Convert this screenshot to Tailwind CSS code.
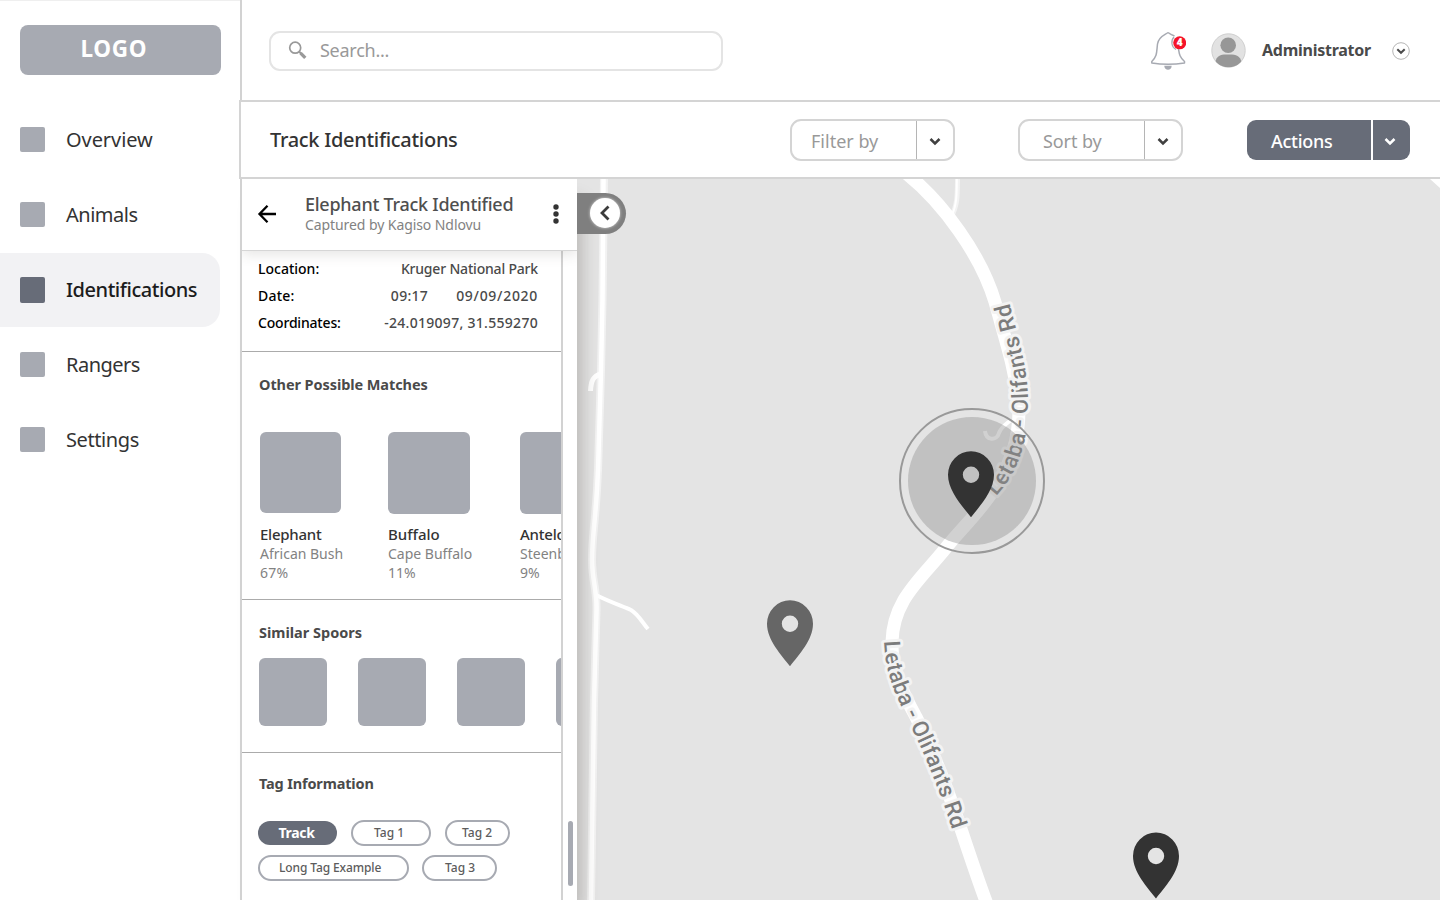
<!DOCTYPE html>
<html lang="en">
<head>
<meta charset="utf-8">
<title>Track Identifications</title>
<script src="https://cdn.jsdelivr.net/npm/@tailwindcss/browser@4"></script>
</head>
<body class="flex h-[900px] w-[1440px] overflow-hidden bg-white font-['Noto_Sans',sans-serif] text-[#333]">

<!-- Sidebar -->
<aside class="flex w-60 shrink-0 flex-col border-t border-[#efefef]">
  <div class="mt-6 ml-[19.5px] flex h-[50px] w-[201px] items-center rounded-lg bg-[#a7aab2] pl-[61px] text-[22.5px] leading-none font-bold text-white"><span class="-translate-y-[1px] tracking-[0.7px]">LOGO</span></div>
  <nav class="mt-[27px] flex flex-col text-xl">
    <a class="flex h-[75px] items-center pl-[19.5px]"><i class="mr-[21px] size-[25.5px] rounded-[2px] bg-[#a7aab2]"></i><span class="tracking-[-0.07px]">Overview</span></a>
    <a class="flex h-[75px] items-center pl-[19.5px]"><i class="mr-[21px] size-[25.5px] rounded-[2px] bg-[#a7aab2]"></i><span class="tracking-[-0.5px]">Animals</span></a>
    <a class="mt-px flex h-[74px] w-[220px] items-center rounded-r-[18px] bg-[#f2f2f4] pl-[19.5px] font-medium text-[#1c1c1c]"><i class="mr-[21px] size-[25.5px] rounded-[2px] bg-[#676c78]"></i><span class="tracking-[-0.46px]">Identifications</span></a>
    <a class="flex h-[75px] items-center pl-[19.5px]"><i class="mr-[21px] size-[25.5px] rounded-[2px] bg-[#a7aab2]"></i><span class="tracking-[-0.5px]">Rangers</span></a>
    <a class="flex h-[75px] items-center pl-[19.5px]"><i class="mr-[21px] size-[25.5px] rounded-[2px] bg-[#a7aab2]"></i><span class="tracking-[-0.4px]">Settings</span></a>
  </nav>
</aside>

<main class="flex w-[1200px] flex-col">
  <!-- Top bar -->
  <header class="flex h-[100px] shrink-0 items-center border-l-2 border-[#d2d2d2]">
    <div class="mt-[2px] ml-[27px] flex h-10 w-[454px] items-center rounded-[11px] border-2 border-[#e4e4e4] pb-[2px] pl-[17px] text-lg text-[#999]">
      <svg class="mr-[12px] size-5" viewBox="0 0 20 20" fill="none" stroke="#999"><circle cx="7.2" cy="7.7" r="5.500" stroke-width="1.700"/><path d="M11.3 11.800l2 2" stroke-width="2"/><path d="M12.600 13.100l4.700 4.700" stroke-width="3.300"/></svg>
      <span class="tracking-[-0.26px]">Search...</span>
    </div>
    <svg class="ml-[427px] h-10 w-9" viewBox="0 0 36 40" fill="none">
      <path d="M18 2.500 C14.500 5 8.500 6.500 7.500 14 C6.500 22 7.500 26 1.800 31.500 V33 C12 34.700 24 34.700 34.500 33 V31.500 C29.500 27 29.300 24 28.500 19 M18 2.500 C20 4 22 5 24.500 6" stroke="#a7aab2" stroke-width="1.500" stroke-linejoin="round"/>
      <path d="M24 7 A8 8 0 0 0 26 19.500" stroke="#a7aab2" stroke-width="1.200"/>
      <path d="M14.300 35.700 H21.700 C21.700 41 14.300 41 14.300 35.700Z" fill="#a7aab2"/>
      <circle cx="29.700" cy="12.800" r="6.500" fill="#f5142a"/>
      <text x="29.600" y="16.400" font-family="Noto Sans" font-size="10" font-weight="900" fill="#fff" text-anchor="middle">4</text>
    </svg>
    <svg class="ml-[25px] size-[35px]" viewBox="0 0 35 35"><defs><clipPath id="av"><circle cx="17.500" cy="17.500" r="16.800"/></clipPath></defs><circle cx="17.500" cy="17.500" r="16.700" fill="#e2e2e2" stroke="#cfcfcf"/><circle cx="17.200" cy="12.200" r="7.800" fill="#979797"/><path d="M4 34 V31 C4.500 25 8 21.500 13 21.500 H21 C27 21.500 30 25 31 31 V35Z" fill="#979797" clip-path="url(#av)"/></svg>
    <span class="ml-[16px] w-[130px] text-base font-bold tracking-[-0.26px] text-[#4a4a4a]">Administrator</span>
    <svg class="mt-[2px] size-[18px]" viewBox="0 0 18 18" fill="none"><circle cx="9" cy="9" r="8.300" stroke="#b5b5b5"/><path d="M5.300 7.200L9 10.800l3.700-3.600" stroke="#4a4a4a" stroke-width="2"/></svg>
  </header>

  <!-- Toolbar -->
  <section class="-ml-px flex h-[79px] w-[1201px] shrink-0 items-center border-y-2 border-l-2 border-[#d4d4d4] bg-white">
    <h1 class="ml-[29px] w-[520px] pt-px text-xl font-medium tracking-[-0.3px]">Track Identifications</h1>
    <div class="mt-px flex h-[42px] w-[165px] items-stretch rounded-[11px] border-2 border-[#d4d4d4] text-lg text-[#999]">
      <span class="flex flex-1 items-center pt-px pl-[19px]">Filter by</span>
      <span class="flex w-[37px] items-center justify-center border-l border-[#b5b5b5] pt-px pr-px"><svg class="size-3" viewBox="0 0 12 12" fill="none" stroke="#404040" stroke-width="2.500"><path d="M1.500 4L6 8.500l4.500-4.500"/></svg></span>
    </div>
    <div class="mt-px ml-[63px] flex h-[42px] w-[165px] items-stretch rounded-[11px] border-2 border-[#d4d4d4] text-lg text-[#999]">
      <span class="flex flex-1 items-center pt-px pl-[23px] tracking-[-0.1px]">Sort by</span>
      <span class="flex w-[37px] items-center justify-center border-l border-[#b5b5b5] pt-px pr-px"><svg class="size-3" viewBox="0 0 12 12" fill="none" stroke="#404040" stroke-width="2.500"><path d="M1.500 4L6 8.500l4.500-4.500"/></svg></span>
    </div>
    <div class="mt-px ml-[64px] flex h-10 w-[163px] items-stretch overflow-hidden rounded-[9px] bg-[#676c78] text-lg font-medium text-white">
      <span class="flex flex-1 items-center pt-px pl-6 tracking-[-0.28px]">Actions</span>
      <span class="flex w-[39px] items-center justify-center border-l-2 border-white pt-px pr-[3px]"><svg class="size-3" viewBox="0 0 12 12" fill="none" stroke="#fff" stroke-width="2.500"><path d="M1.500 4L6 8.500l4.500-4.500"/></svg></span>
    </div>
  </section>

  <div class="flex min-h-0 flex-1">
    <!-- Detail panel -->
    <section class="relative z-10 flex w-[337px] shrink-0 flex-col border-l-2 border-[#d2d2d2] bg-white shadow-[10px_16px_16px_-5px_rgba(70,62,55,0.27)]">
      <header class="relative z-10 flex h-[72px] shrink-0 items-center border-b border-[#d6d6d6] bg-white shadow-[0_4px_12px_rgba(70,62,55,0.13)] [clip-path:inset(0_0_-20px_0)]">
        <svg class="-mt-px ml-[15px] size-5" viewBox="0 0 20 20" fill="none" stroke="#000" stroke-width="2.300"><path d="M19 10H2.500M10.500 1.800L2.500 10l8 8.200"/></svg>
        <div class="-mt-px ml-[28px] w-[243px]">
          <h2 class="text-lg leading-[23px] font-medium tracking-[-0.26px] text-[#4f4f4f]">Elephant Track Identified</h2>
          <p class="-mt-px text-sm leading-5 tracking-[-0.08px] text-[#828282]">Captured by Kagiso Ndlovu</p>
        </div>
        <svg class="-mt-px ml-[4.5px] h-5 w-1.5" viewBox="0 0 6 20" fill="#333"><circle cx="3" cy="3" r="2.700"/><circle cx="3" cy="10" r="2.700"/><circle cx="3" cy="17" r="2.700"/></svg>
      </header>

      <div class="flex min-h-0 flex-1">
        <div class="flex w-[321px] shrink-0 flex-col overflow-hidden border-r-2 border-[#d2d2d2]">
          <dl class="flex h-[101px] shrink-0 flex-col border-b border-[#ababab] pt-1 pr-[23px] pl-4 text-sm leading-[27px] font-medium text-[#4a4a4a]">
            <div class="flex justify-between"><dt class="text-black">Location:</dt><dd class="tracking-[-0.19px]">Kruger National Park</dd></div>
            <div class="flex"><dt class="mr-auto tracking-[0.2px] text-black">Date:</dt><dd class="mr-7 tracking-[0.29px]">09:17</dd><dd class="tracking-[0.7px]">09/09/2020</dd></div>
            <div class="flex justify-between"><dt class="tracking-[-0.19px] text-black">Coordinates:</dt><dd class="tracking-[0.29px]">-24.019097, 31.559270</dd></div>
          </dl>

          <section class="h-[248px] shrink-0 border-b border-[#ababab] pt-[22px] pl-[17px]">
            <h3 class="text-[14.5px] leading-5 font-bold tracking-[-0.08px] text-[#4a4a4a]">Other Possible Matches</h3>
            <div class="mt-[37.5px] flex text-sm leading-[19px] whitespace-nowrap text-[#828282]">
              <article class="w-[128px] shrink-0 pl-px"><div class="mt-[0.5px] h-[81px] w-[80.5px] rounded-md bg-[#a7aab2]"></div><h4 class="mt-[12px] text-[15px] font-medium tracking-[-0.24px] text-[#333]">Elephant</h4><p>African Bush</p><p class="tracking-[0.24px]">67%</p></article>
              <article class="w-[132px] shrink-0 pl-px"><div class="h-[82px] w-[82px] rounded-md bg-[#a7aab2]"></div><h4 class="mt-[11.5px] text-[15px] font-medium text-[#333]">Buffalo</h4><p>Cape Buffalo</p><p>11%</p></article>
              <article class="w-[132px] shrink-0 pl-px"><div class="h-[82px] w-[82px] rounded-md bg-[#a7aab2]"></div><h4 class="mt-[11.5px] text-[15px] font-medium tracking-[-0.24px] text-[#333]">Antelope</h4><p>Steenbok</p><p>9%</p></article>
            </div>
          </section>

          <section class="h-[153px] shrink-0 border-b border-[#ababab] pt-[22px] pl-[17px]">
            <h3 class="text-[14.5px] leading-5 font-bold text-[#4a4a4a]">Similar Spoors</h3>
            <div class="mt-[16px] flex gap-[31px]">
              <div class="size-[68px] shrink-0 rounded-md bg-[#a7aab2]"></div>
              <div class="size-[68px] shrink-0 rounded-md bg-[#a7aab2]"></div>
              <div class="size-[68px] shrink-0 rounded-md bg-[#a7aab2]"></div>
              <div class="size-[68px] shrink-0 rounded-md bg-[#a7aab2]"></div>
            </div>
          </section>

          <section class="flex-1 pt-[20px] pl-4">
            <h3 class="pl-px text-[14.5px] leading-5 font-bold tracking-[-0.15px] text-[#4a4a4a]">Tag Information</h3>
            <div class="mt-[27px] flex text-xs font-medium text-[#5c5c5c]">
              <span class="mt-px flex h-6 w-[79px] items-center justify-center rounded-full bg-[#676c78] pr-[2px] pb-px text-sm font-bold tracking-[-0.3px] text-white">Track</span>
              <span class="ml-[14px] flex h-[26px] w-20 items-center rounded-full border-2 border-[#a7aab2] pl-[21px]">Tag 1</span>
              <span class="ml-[14px] flex h-[26px] w-[65px] items-center rounded-full border-2 border-[#a7aab2] pl-[15px]">Tag 2</span>
            </div>
            <div class="mt-[9px] flex text-xs font-medium text-[#5c5c5c]">
              <span class="flex h-[26px] w-[151px] items-center rounded-full border-2 border-[#a7aab2] pl-[19px] tracking-[-0.11px]">Long Tag Example</span>
              <span class="ml-[13px] flex h-[26px] w-[75px] items-center rounded-full border-2 border-[#a7aab2] pl-[21px]">Tag 3</span>
            </div>
          </section>
        </div>
        <div class="flex flex-1 items-end justify-center"><div class="mb-[14px] ml-px h-[65px] w-[5px] rounded-full bg-[#a7aab2]"></div></div>
      </div>
    </section>

    <!-- Map -->
    <section class="relative flex-1 bg-[#e4e4e4]">
      <svg class="block h-[721px] w-[863px]" viewBox="577 179 863 721" fill="none">
        <path d="M604 179 L602.500 300 L601 370 L598 470 C596 520 592 535 592 560 C592 580 597 590 596.500 610 L594 700 L591 900" stroke="#f2f2f2" stroke-width="8"/>
        <path d="M603.500 179 L602.500 300 L601 370 L598 470 C596 520 592 535 592 560 C592 580 597 590 596.500 610 L594 700 L591 900" stroke="#fff" stroke-width="4.500"/>
        <path d="M590.500 391 C591 381 593 376 601 374" stroke="#fff" stroke-width="5"/>
        <path d="M596 595 C610 602 622 606 631 610 C638 614 642 622 648 629" stroke="#fff" stroke-width="4"/>
        <path d="M957.500 179 C957.500 195 957.500 206 951 217" stroke="#f3f3f3" stroke-width="5"/>
        <path d="M956.800 179 C956.800 195 956.800 206 951 217" stroke="#fff" stroke-width="2"/>
        <path d="M1430 179 L1440 188 V179Z" fill="#fff"/>
        <path d="M907 174 C943 203 981 255 995 302 C1006 342 1014 365 1019 403 C1020 440 1010 465 995 488 C980 512 960 530 945 549 C920 580 893 600 892 642 C891 670 904 695 916 717 C935 755 952 802 962 832 C972 862 978 880 987 904" stroke="#fff" stroke-width="13"/>
        <path d="M985 431 C986 441 997 441 999 433 C1001 427 1005 425 1011 420" stroke="#fff" stroke-width="4"/>
        <path id="road-a" d="M996 496 C1009 482 1023 460 1026 430 C1028 410 1029 395 1026 375 C1023 350 1015 328 1006 288"/>
        <path id="road-b" d="M884 641 C885 669 893 690 904 712 L914 733 C926 758 939 788 955 838"/>
        <g font-family="Roboto, sans-serif" font-size="22.500" font-weight="500" fill="#7c7c7c" stroke="#f3f3f3" stroke-width="6" stroke-linejoin="round" paint-order="stroke">
          <text textLength="203" lengthAdjust="spacing"><textPath href="#road-a" textLength="203">Letaba - Olifants Rd</textPath></text>
          <text textLength="202" lengthAdjust="spacing"><textPath href="#road-b" textLength="202">Letaba - Olifants Rd</textPath></text>
        </g>
        <circle cx="972" cy="481" r="72" stroke="#999" stroke-width="2"/>
        <circle cx="972" cy="481" r="64" fill="#8c8c8c" fill-opacity="0.4"/>
        <defs><path id="pin" fill-rule="evenodd" d="M0 42.500 C-9 31 -23 16 -23 0 A23 23.500 0 0 1 23 0 C23 16 9 31 0 42.500Z M0 -8.200 A8.200 8.200 0 1 0 0 8.200 A8.200 8.200 0 1 0 0 -8.200Z"/></defs>
        <use href="#pin" transform="translate(971 474.800)" fill="#333"/>
        <use href="#pin" transform="translate(790 623.800)" fill="#666"/>
        <use href="#pin" transform="translate(1156 856)" fill="#333"/>
      </svg>
      <button class="absolute top-[14px] left-0 z-20 flex h-[41px] w-[49px] items-center justify-end rounded-r-full bg-[#7f7f7f] pr-1.5 pb-px">
        <span class="flex size-[30px] items-center justify-center rounded-full bg-white shadow-[0_0_3px_rgba(255,255,255,0.7)]"><svg class="size-4" viewBox="0 0 16 16" fill="none" stroke="#3c3c3c" stroke-width="2.800"><path d="M11.500 1.500L5 8l6.500 6.500"/></svg></span>
      </button>
    </section>
  </div>
</main>
</body>
</html>
